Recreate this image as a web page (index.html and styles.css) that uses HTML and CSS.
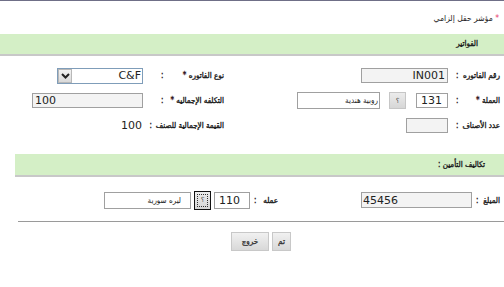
FILE: index.html
```html
<!DOCTYPE html>
<html lang="ar" dir="rtl">
<head>
    <meta charset="UTF-8">
    <meta name="viewport" content="width=device-width, initial-scale=1.0">
    <title>الفواتير</title>
    <link rel="stylesheet" href="styles.css">
</head>
<body>
<div class="page">

    <div class="note"><span class="req">*</span> مؤشر حقل إلزامي</div>

    <div class="section-title">الفواتير</div>

    <div class="form-grid invoice">
        <label class="lbl"><span>رقم الفاتوره</span><span>:</span></label>
        <div class="cell">
            <input class="field ro invoice-no" value="IN001" readonly>
        </div>
        <label class="lbl"><span>نوع الفاتوره <span class="req">*</span></span><span>:</span></label>
        <div class="cell">
            <div class="select">
                <span class="select-value">C&amp;F</span>
                <span class="select-arrow">
                    <svg width="9" height="6" viewBox="0 0 9 6"><path d="M1 1 L4.5 4.5 L8 1" fill="none" stroke="#222" stroke-width="2"/></svg>
                </span>
            </div>
        </div>

        <label class="lbl"><span>العملة <span class="req">*</span></span><span>:</span></label>
        <div class="cell">
            <input class="field code" value="131">
            <button class="lookup">؟</button>
            <input class="field name" value="روبية هندية" dir="rtl">
        </div>
        <label class="lbl"><span>التكلفه الإجماليه <span class="req">*</span></span><span>:</span></label>
        <div class="cell">
            <input class="field ro total" value="100" readonly>
        </div>

        <label class="lbl"><span>عدد الأصناف</span><span>:</span></label>
        <div class="cell">
            <input class="field ro count" value="" readonly>
        </div>
        <label class="lbl long"><span>القيمة الإجمالية للصنف</span><span>:</span></label>
        <div class="cell">
            <span class="value">100</span>
        </div>
    </div>

    <div class="section-title sub">تكاليف التأمين :</div>

    <div class="form-grid insurance">
        <label class="lbl"><span>المبلغ</span><span>:</span></label>
        <div class="cell">
            <input class="field ro amount" value="45456" readonly>
        </div>
        <label class="lbl"><span>عمله</span><span>:</span></label>
        <div class="cell">
            <input class="field code wide" value="110">
            <button class="lookup focused">؟</button>
            <input class="field name syr" value="ليره سورية" dir="rtl">
        </div>
    </div>

    <div class="divider"></div>

    <div class="actions">
        <button class="btn">تم</button>
        <button class="btn">خروج</button>
    </div>

</div>
</body>
</html>
```

FILE: styles.css
```css
body {
    margin: 0;
    font-family: "DejaVu Sans Condensed", "DejaVu Sans", sans-serif;
    font-size: 8px;
    color: #1e1e1e;
    background: #fff;
}

.page {
    width: 504px;
    height: 286px;
    border-top: 1px solid #6f6f87;
}

.req {
    color: #e8356a;
}

.note {
    height: 33px;
    line-height: 34px;
    padding-right: 5px;
    font-size: 8.5px;
}

/* green section bars */
.section-title {
    height: 20px;
    line-height: 20px;
    background: #d4efc6;
    border-bottom: 2px solid #c8c8c8;
    padding-right: 26px;
    -webkit-text-stroke: 0.35px #1e1e1e;
}

.section-title.sub {
    height: 21px;
    line-height: 21px;
    margin: 16px 0 0 15px;
    padding-right: 19px;
}

/* form rows */
.form-grid {
    display: grid;
    align-items: center;
}

.invoice {
    grid-template-columns: 52px 224px 81px 147px;
    grid-auto-rows: 25px;
    margin-top: 7px;
}

.insurance {
    grid-template-columns: 28px 194px 28px 254px;
    grid-auto-rows: 30px;
    margin-top: 8px;
}

.lbl {
    display: flex;
    justify-content: space-between;
    gap: 4px;
    padding: 0 4px 0 4px;
    white-space: nowrap;
    -webkit-text-stroke: 0.35px #1e1e1e;
}

.invoice .lbl:nth-child(4n+3) {
    padding-left: 14px;
}

.invoice .lbl.long {
    padding-left: 6px;
}

.insurance .lbl {
    padding-left: 0;
}

.cell {
    display: flex;
    align-items: center;
    padding-right: 4px;
}

.value {
    font-family: "DejaVu Sans", sans-serif;
    font-size: 11px;
    padding-right: 1px;
}

.field {
    box-sizing: border-box;
    height: 15px;
    margin: 0;
    padding: 0 2px;
    border: 1px solid #a0a0a0;
    background: #fff;
    font-family: "DejaVu Sans", sans-serif;
    font-size: 11px;
    color: #222;
    direction: ltr;
    text-align: left;
    outline: none;
}

.field.ro {
    background: #f3f3f3;
}

.invoice-no {
    width: 87px;
    text-align: right;
}

.total {
    width: 111px;
}

.count {
    width: 42px;
    height: 15px;
}

.amount {
    width: 111px;
    height: 16px;
    padding-left: 1px;
}

.code {
    width: 32px;
    padding-left: 4px;
}

.code.wide {
    width: 36px;
    height: 17px;
}

.field.name {
    width: 83px;
    height: 17px;
    direction: rtl;
    text-align: right;
    font-family: "DejaVu Sans Condensed", "DejaVu Sans", sans-serif;
    font-size: 8px;
    padding: 0 1px;
}

.field.name.syr {
    width: 87px;
    padding-right: 9px;
}

.lookup {
    box-sizing: border-box;
    width: 17px;
    height: 17px;
    margin: 0 10px 0 9px;
    padding: 0;
    border: 1px solid #c6c6c6;
    background: linear-gradient(#ececec, #d6d6d6);
    font-family: "DejaVu Sans", sans-serif;
    font-size: 7px;
    color: #444;
    position: relative;
}

.lookup.focused {
    height: 19px;
    margin: 0 3px 0 3px;
    border-color: #111;
}

.lookup.focused::after {
    content: "";
    position: absolute;
    inset: 2px;
    border: 1px dotted #333;
}

/* drop-down */
.select {
    box-sizing: border-box;
    width: 86px;
    height: 16px;
    border: 1px solid #7f9db9;
    display: flex;
    align-items: center;
    background: #fff;
}

.select-value {
    flex: 1;
    text-align: right;
    direction: ltr;
    padding-right: 1px;
    font-family: "DejaVu Sans", sans-serif;
    font-size: 11px;
}

.select-arrow {
    box-sizing: border-box;
    width: 14px;
    height: 14px;
    border: 1px solid #b8b8b8;
    background: linear-gradient(#f2f2f2, #d9d9d9);
    display: flex;
    align-items: center;
    justify-content: center;
}

.divider {
    height: 1px;
    background: #9a9a9a;
    margin: 6px 0 0 18px;
}

.actions {
    display: flex;
    justify-content: center;
    gap: 3px;
    margin: 10px 0 0 18px;
}

.btn {
    box-sizing: border-box;
    height: 19px;
    min-width: 19px;
    padding: 0 3px;
    border: 1px solid #c8c8c8;
    background: linear-gradient(#f1f1f1, #d8d8d8);
    font-family: "DejaVu Sans Condensed", "DejaVu Sans", sans-serif;
    font-size: 8px;
    color: #333;
    -webkit-text-stroke: 0.3px #333;
}

.btn + .btn {
    width: 38px;
}
```
